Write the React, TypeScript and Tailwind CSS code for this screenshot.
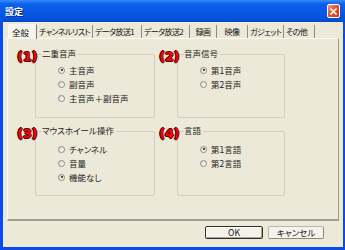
const jp = "font-['Noto_Sans_CJK_JP','Noto_Sans',sans-serif] [font-feature-settings:'palt']";

const tabs = [
  { label: "全般", w: "w-[29px]", active: true },
  { label: "チャンネルリスト", w: "w-[56px]" },
  { label: "データ放送1", w: "w-[49px]" },
  { label: "データ放送2", w: "w-[48px]" },
  { label: "録画", w: "w-[27px]", center: true },
  { label: "映像", w: "w-[31px]", center: true },
  { label: "ガジェット", w: "w-[36px]" },
  { label: "その他", w: "w-[31px]" },
];

type RadioProps = { label: string; checked?: boolean };

const Radio = ({ label, checked }: RadioProps) => (
  <div className="flex items-center h-[14px]">
    <span className="w-[7px] h-[7px] rounded-full border border-[#8b8b84] bg-[linear-gradient(135deg,#d6d5cc,#ffffff)] flex items-center justify-center shrink-0">
      {checked && <span className="w-[2px] h-[2px] rounded-full bg-[#1a1a1a]" />}
    </span>
    <span className="ml-[4px] leading-none text-[#222]">{label}</span>
  </div>
);

type GroupProps = {
  num: string;
  title: string;
  pad: string;
  items: RadioProps[];
};

const Group = ({ num, title, pad, items }: GroupProps) => (
  <div className={`relative border border-[#d0d0bf] rounded-[2px] pl-[22px] ${pad}`}>
    <span className="absolute -top-[6px] left-[6px] bg-[#ece9d8] pr-[2px] leading-none text-[#222]">{title}</span>
    <span className="absolute -top-[5px] -left-[19px] font-['DejaVu_Sans',sans-serif] font-bold text-[13px] leading-none tracking-[-0.3px] text-[#ff0000] [text-shadow:1px_0_0_#400,-1px_0_0_#400,0_1px_0_#400,0_-1px_0_#400]">
      {num}
    </span>
    {items.map((it) => (
      <Radio key={it.label} {...it} />
    ))}
  </div>
);

export default function App() {
  return (
    <div className={`w-[345px] h-[250px] flex flex-col bg-[#0a4de6] ${jp} text-[8.5px] overflow-hidden`}>
      {/* title bar */}
      <div className="h-[22px] shrink-0 flex items-center justify-between pl-[5px] pr-[5px] bg-[linear-gradient(to_bottom,#3a8cff_0%,#0b62ec_18%,#0858e4_55%,#0652dc_85%,#0446c8_100%)]">
        <span className="text-white font-bold text-[9px] leading-none [text-shadow:1px_1px_0_#0a2a80]">設定</span>
        <div className="w-[13px] h-[14px] rounded-[2px] border border-white bg-[linear-gradient(135deg,#f09a7a,#e0542b_45%,#c8401c)] flex items-center justify-center">
          <svg width="7" height="7" viewBox="0 0 7 7">
            <path d="M1 1 L6 6 M6 1 L1 6" stroke="#fff" strokeWidth="1.6" strokeLinecap="square" />
          </svg>
        </div>
      </div>

      {/* body */}
      <div className="flex-1 flex flex-col mr-[2px] mb-[3px] ml-[3px] bg-[#ece9d8] pt-[1px] pl-[4px] pr-[4px]">
        {/* tabs */}
        <div className="h-[15px] shrink-0 flex items-end pl-[1px] text-[8px] tracking-[-0.6px]">
          {tabs.map((t) =>
            t.active ? (
              <div
                key={t.label}
                className={`${t.w} h-[15px] relative z-10 -mb-[1px] bg-[#f5f4ee] border-t border-l border-[#fcfcfa] border-r border-r-[#7a7a74] pl-[3px] flex items-center leading-none text-[#111] text-[8.5px] tracking-normal`}
              >
                {t.label}
              </div>
            ) : (
              <div
                key={t.label}
                className={`${t.w} h-[13px] border-r border-[#8e8d86] flex items-center ${t.center ? "justify-center" : "pl-[2px]"} whitespace-nowrap overflow-hidden leading-none text-[#111]`}
              >
                {t.label}
              </div>
            ),
          )}
        </div>

        {/* panel */}
        <div className="h-[183px] shrink-0 border-t border-l border-[#fbfaf6] border-r border-r-[#9c9a8e] border-b-2 border-b-[#a09e92] pl-[27px] pt-[15px]">
          <div className="grid grid-cols-[120px_108px] grid-rows-[64px_65px] gap-x-[22px] gap-y-[13px]">
            <Group
              num="(1)"
              title="二重音声"
              pad="pt-[8px]"
              items={[{ label: "主音声", checked: true }, { label: "副音声" }, { label: "主音声＋副音声" }]}
            />
            <Group
              num="(2)"
              title="音声信号"
              pad="pt-[8px]"
              items={[{ label: "第1音声", checked: true }, { label: "第2音声" }]}
            />
            <Group
              num="(3)"
              title="マウスホイール操作"
              pad="pt-[10px]"
              items={[{ label: "チャンネル" }, { label: "音量" }, { label: "機能なし", checked: true }]}
            />
            <Group
              num="(4)"
              title="言語"
              pad="pt-[10px]"
              items={[{ label: "第1言語", checked: true }, { label: "第2言語" }]}
            />
          </div>
        </div>

        {/* buttons */}
        <div className="mt-[5px] flex justify-end gap-[5px] pr-[15px]">
          <button className="w-[58px] h-[13px] rounded-[2px] border border-[#2e2e2a] bg-[#f2f1ea] shadow-[inset_1px_1px_0_#ffffff,inset_-1px_-1px_0_#a8a699] flex items-center justify-center leading-none text-[#111]">
            OK
          </button>
          <button className="w-[56px] h-[13px] rounded-[2px] border border-[#b9b7aa] border-r-[#8c8a7e] border-b-[#8c8a7e] bg-[#f4f3ec] flex items-center justify-center leading-none text-[#111]">
            キャンセル
          </button>
        </div>
      </div>
    </div>
  );
}
